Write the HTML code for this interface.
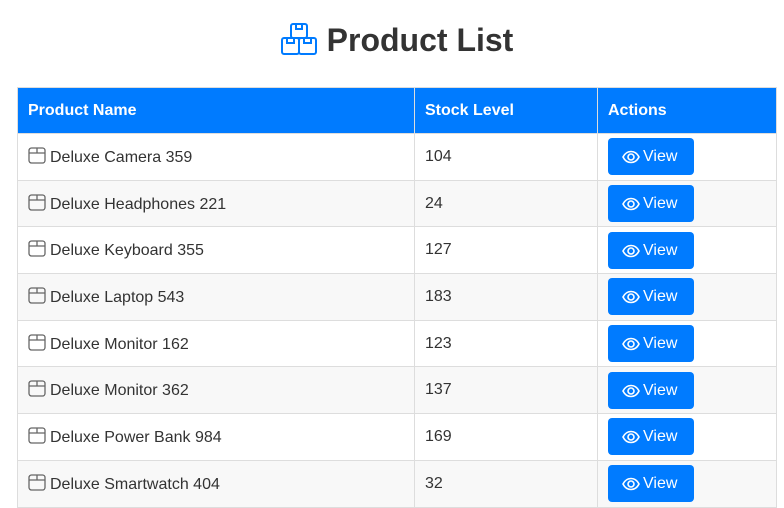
<!DOCTYPE html>
<html><head><meta charset="utf-8"><style>
*{margin:0;padding:0;box-sizing:border-box}
body{width:784px;height:505px;overflow:hidden;background:#fff;font-family:"Liberation Sans",Arial,sans-serif;color:#333}
h1{position:absolute;top:20px;left:5px;width:784px;text-align:center;font-size:32px;font-weight:bold;line-height:40px;color:#333}
h1 svg{vertical-align:-5px;margin-right:9px}
table{position:absolute;left:17px;top:87px;width:760px;border-collapse:collapse;font-size:16px}
th{background:#007bff;color:#fff;text-align:left;font-weight:bold;height:46px;padding:0 10px;border:1px solid #ddd}
td{height:46.7px;padding:0 10px;border:1px solid #ddd;color:#333}
tr:nth-child(even) td{background:#f8f8f8}
td svg{vertical-align:-2px;margin-right:4px}
.btn{display:inline-block;background:#007bff;color:#fff;border-radius:4px;width:86px;height:37px;line-height:37px;padding-left:14px;font-size:16px}
.btn svg{vertical-align:-3px;margin-right:3px}
</style></head><body>
<h1><svg width="37" height="33" viewBox="0 0 37 33" fill="none" stroke="#007bff" stroke-width="2"><rect x="10" y="1" width="16" height="14" rx="2"/><path d="M15 1v5h6V1"/><rect x="1" y="15" width="17" height="16" rx="2"/><path d="M6 15v5h7v-5"/><rect x="18" y="15" width="17" height="16" rx="2"/><path d="M23 15v5h7v-5"/></svg>Product List</h1>
<table>
<tr><th style="width:397px">Product Name</th><th style="width:183px">Stock Level</th><th>Actions</th></tr>
</table>
<script>
var d=[["Deluxe Camera 359",104],["Deluxe Headphones 221",24],["Deluxe Keyboard 355",127],["Deluxe Laptop 543",183],["Deluxe Monitor 162",123],["Deluxe Monitor 362",137],["Deluxe Power Bank 984",169],["Deluxe Smartwatch 404",32]];
var box='<svg width="18" height="17" viewBox="0 0 18 17" fill="none" stroke="#666" stroke-width="1.3"><rect x="1" y="1" width="16" height="15" rx="2.5"/><path d="M1 6h16M9 1v5"/></svg>';
var eye='<svg width="18" height="14" viewBox="0 0 18 14" fill="none" stroke="#fff" stroke-width="1.6"><path d="M1 7C3 3 6 1.5 9 1.5S15 3 17 7C15 11 12 12.5 9 12.5S3 11 1 7z"/><circle cx="9" cy="7" r="3"/></svg>';
var t=document.querySelector('table'),h='';
d.forEach(function(r){h+='<tr><td>'+box+r[0]+'</td><td>'+r[1]+'</td><td><span class="btn">'+eye+'View</span></td></tr>';});
t.insertAdjacentHTML('beforeend',h);
</script>
</body></html>
